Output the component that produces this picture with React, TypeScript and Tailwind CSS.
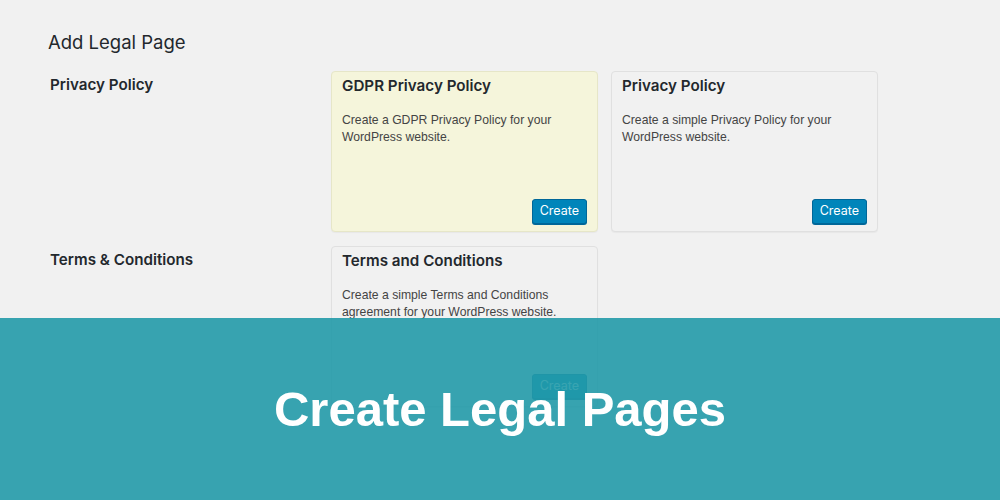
const cards = [
  {
    label: "Privacy Policy",
    items: [
      {
        title: "GDPR Privacy Policy",
        text: "Create a GDPR Privacy Policy for your WordPress website.",
        highlight: true,
      },
      {
        title: "Privacy Policy",
        text: "Create a simple Privacy Policy for your WordPress website.",
        highlight: false,
      },
    ],
  },
  {
    label: "Terms & Conditions",
    items: [
      {
        title: "Terms and Conditions",
        text: "Create a simple Terms and Conditions agreement for your WordPress website.",
        highlight: false,
      },
    ],
  },
];

const Card = ({
  title,
  text,
  highlight,
}: {
  title: string;
  text: string;
  highlight: boolean;
}) => {
  return (
    <div
      className={`flex h-[161px] w-[267px] flex-col rounded-[4px] border px-[10px] pt-[4px] pb-[7px] shadow-[0_1px_1px_rgba(0,0,0,0.04)] ${
        highlight ? "border-[#e6e6c8] bg-[#f5f5db]" : "border-[#e0e0e0] bg-[#f1f1f1]"
      }`}
    >
      <div className="text-[15.2px] leading-[20px] font-semibold text-[#23282d]">
        {title}
      </div>
      <p
        className="mt-[16px] w-[225px] text-[12.2px] leading-[17px] text-[#444]"
        style={{ fontFamily: "'Liberation Sans', Arial, sans-serif" }}
      >
        {text}
      </p>
      <div className="mt-auto flex justify-end">
        <button className="h-[25px] rounded-[3px] border border-[#006799] bg-[#0085ba] px-[7px] text-[12.5px] text-white shadow-[0_1px_0_#006799]">
          Create
        </button>
      </div>
    </div>
  );
};

export default function App() {
  return (
    <div
      className="relative h-[500px] w-[1000px] overflow-hidden bg-[#f1f1f1]"
      style={{ fontFamily: "Inter, 'Noto Sans', sans-serif" }}
    >
      <div className="pt-[29px] pl-[48px]">
        <h1 className="text-[18.5px] leading-[26px] font-normal text-[#23282d]">
          Add Legal Page
        </h1>
        <div className="mt-[16px] flex flex-col gap-[14px]">
          {cards.map((row) => (
            <div key={row.label} className="flex">
              <div className="w-[283px] pt-[4px] pl-[2px] text-[15.2px] leading-[20px] font-semibold text-[#23282d]">
                {row.label}
              </div>
              <div className="flex gap-[13px]">
                {row.items.map((c) => (
                  <Card key={c.title} {...c} />
                ))}
              </div>
            </div>
          ))}
        </div>
      </div>

      <div className="absolute top-[318px] left-0 flex h-[182px] w-full items-center justify-center bg-[#229aa9]/90">
        <span
          className="text-[49px] leading-none font-bold text-white"
          style={{ fontFamily: "'Liberation Sans', Arial, sans-serif" }}
        >
          Create Legal Pages
        </span>
      </div>
    </div>
  );
}
